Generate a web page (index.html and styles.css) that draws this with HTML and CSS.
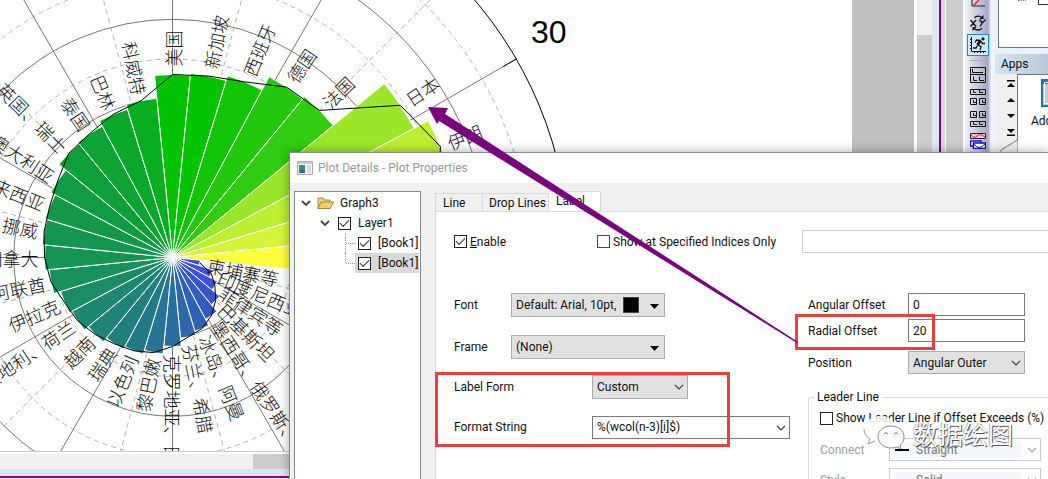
FILE: index.html
```html
<!DOCTYPE html>
<html lang="en">
<head>
<meta charset="utf-8">
<title>Plot Details</title>
<link rel="stylesheet" href="styles.css">
</head>
<body>
<main class="desktop">
  <section class="graph-window">
    <svg class="chart" id="chart" role="img" aria-label="Polar chart by country"></svg>
    <div class="hscroll"><div class="hscroll-thumb"></div></div>
    <div class="frame-edge"></div>
  </section>
  <div class="page-gray"></div>
  <div class="vscroll"><div class="vscroll-track"></div></div>
  <div class="frame-side"></div>
  <div class="mdi-gray"></div>
  <nav class="toolbar" aria-label="Graph tools">
    <svg class="tool-cut" viewBox="0 0 16 7"><path d="M2 0V6H15" fill="none" stroke="#222"/><path d="M3 6L9 0" stroke="#e22" fill="none" stroke-width="1.5"/></svg>
    <button class="tool" aria-label="Exchange X-Y axes"><svg viewBox="0 0 16 16"><g fill="none" stroke="#111" stroke-width="1.3"><path d="M.5 5L6 11.500M6 5L.5 11.500M9.500 4.500L12.200 8L15.500 4.500M12.200 8L10 11.500"/><path d="M4.500 3C6 .5 9.500 .5 12 2.500M12 13.500C9.500 15.500 6 15.500 4 13.500"/></g><path d="M13.500 0V4H9.500ZM2.500 16V12H6.500Z" fill="#111"/></svg></button>
    <button class="tool selected" aria-label="Speed mode"><svg viewBox="0 0 16 16"><path d="M1.500 0V14.500H16M0 2.500H1M0 5.500H1M0 8.500H1M0 11.500H1M4.500 15V16M7.500 15V16M10.500 15V16M13.500 15V16" fill="none" stroke="#111"/><circle cx="13" cy="1.800" r="1.600" fill="#111"/><path d="M10.500 3.500L7.500 8" fill="none" stroke="#111" stroke-width="2.800"/><path d="M10.500 3.500L6.500 3L5 5.500M11 4L12.500 6.500H15M8 8L11 9.500L10 13M7.500 8.500L6 11H3" fill="none" stroke="#111" stroke-width="1.300"/></svg></button>
    <span class="tool-rule"></span>
    <button class="tool" aria-label="One over two"><svg viewBox="0 0 16 16"><path d="M.5.5H15.500V15.500H.5ZM.5 7.500H15.500M2.500 2V5.500H13M3.500 9.500V13.500H7M9.500 9.500V13.500H14" fill="none" stroke="#111"/></svg></button>
    <button class="tool" aria-label="Merge layers"><svg viewBox="0 0 16 16"><path d="M.5.5H15.500V5.500H.5ZM3.500 1V3.500H6M9.500 1V3.500H13M.5 9.500H6.500V15.500H.5ZM9.500 9.500H15.500V15.500H9.500ZM3.500 11V13.500H6M12.500 11V13.500H15" fill="none" stroke="#111"/></svg></button>
    <button class="tool" aria-label="Extract layers"><svg viewBox="0 0 16 16"><path d="M.5.5H6.500V6.500H.5ZM9.500.5H15.500V6.500H9.500ZM3.500 2V4.500H6M12.500 2V4.500H15M.5 10.500H15.500V15.500H.5ZM3.500 11V13.500H7M9.500 11V13.500H13" fill="none" stroke="#111"/></svg></button>
    <button class="tool" aria-label="Stack graphs"><svg viewBox="0 0 16 16"><path d="M.5.500H15.500V5.500H.5Z" fill="#f7c4cc" stroke="#223"/><path d="M1 2Q4 6 7 3T15 4" fill="none" stroke="#e22"/><path d="M.5 8H11V13H.5Z" fill="#fff" stroke="#1010d0" stroke-width="1.400"/><path d="M3.500 10H15.500V15.500H3.500Z" fill="#fff" stroke="#1010d0" stroke-width="1.400"/><path d="M4 11Q9 18 15 11" fill="none" stroke="#222"/></svg></button>
  </nav>
  <aside class="side">
    <div class="object-tree"><span class="dots"></span><span class="tree-box"></span></div>
    <h2 class="apps-title">Apps</h2>
    <div class="apps">
      <div class="apps-nav">
        <button aria-label="First"><svg viewBox="0 0 8 8"><path d="M0 0H8V1.500H0ZM4 3L8 7H0Z"/></svg></button>
        <button aria-label="Up"><svg viewBox="0 0 8 8"><path d="M4 2L8 6H0Z"/></svg></button>
        <button aria-label="Down"><svg viewBox="0 0 8 8"><path d="M4 6L8 2H0Z"/></svg></button>
        <button aria-label="Last"><svg viewBox="0 0 8 8"><path d="M0 8H8V6.500H0ZM4 5L8 1H0Z"/></svg></button>
      </div>
      <div class="apps-list">
        <span class="app-icon"></span>
        <span class="app-name">Add</span>
      </div>
      <svg class="apps-corner" viewBox="0 0 18 12"><path d="M0 12L17.500 0V12Z" fill="#f0f0f0"/><path d="M17.500 0L1 10V12" fill="none" stroke="#777"/></svg>
    </div>
  </aside>

  <section class="dialog" role="dialog" aria-label="Plot Details - Plot Properties">
    <header class="titlebar">
      <svg class="app-glyph" viewBox="0 0 16 14"><path d="M.5.5H15.500V13.500H.5Z" fill="#f4f6f8" stroke="#a8acb0"/><path d="M1 1H15V3H1Z" fill="#c5ccd2"/><path d="M2 4H8V12H2Z" fill="#3c8d83"/><path d="M3 9H8V12H3Z" fill="#2f6f86"/><path d="M10 4H14V12H10Z" fill="#d5dbe0"/></svg>
      <h1>Plot Details - Plot Properties</h1>
    </header>
    <div class="dialog-body">
      <ul class="tree">
        <li class="lvl0"><svg class="chev" viewBox="0 0 10 8"><path d="M1 2L5 6L9 2"/></svg>
          <svg class="folder" viewBox="0 0 17 14"><path d="M1 12V2H6L7.500 4H13V6" fill="#f3d27a" stroke="#a8863a"/><path d="M1 12.500L4 6H16.500L13 12.500Z" fill="#f5cf5f" stroke="#a8863a"/></svg><span>Graph3</span></li>
        <li class="lvl1"><svg class="chev" viewBox="0 0 10 8"><path d="M1 2L5 6L9 2"/></svg><label><input type="checkbox" checked>Layer1</label></li>
        <li class="lvl2"><i class="branch"></i><label><input type="checkbox" checked>[Book1]</label></li>
        <li class="lvl2 picked"><i class="branch last"></i><label><input type="checkbox" checked>[Book1]</label></li>
      </ul>
      <div class="pages">
        <div class="tabs" role="tablist">
          <button role="tab">Line</button><button role="tab" class="wide">Drop Lines</button><button role="tab" class="active" aria-selected="true">Label</button>
        </div>
        <form class="panel">
          <div class="top-row">
            <label><input type="checkbox" checked><span><u>E</u>nable</span></label>
            <label><input type="checkbox" class="blue">Show at Specified Indices Only</label>
            <input type="text" class="indices" aria-label="Indices">
          </div>
          <div class="columns">
            <div class="col-left">
              <div class="row"><label for="font">Font</label>
                <span class="combo"><select id="font"><option>Default: Arial, 10pt,</option></select><i class="swatch"></i><svg class="tri" viewBox="0 0 9 5"><path d="M0 0H9L4.500 5Z"/></svg></span></div>
              <div class="row gap-l"><label for="frame">Frame</label>
                <span class="combo"><select id="frame"><option>(None)</option></select><svg class="tri" viewBox="0 0 9 5"><path d="M0 0H9L4.500 5Z"/></svg></span></div>
              <div class="row long gap-m"><label for="form">Label Form</label>
                <span class="combo short"><select id="form"><option>Custom</option></select><svg class="chev" viewBox="0 0 10 8"><path d="M1 2L5 6L9 2"/></svg></span></div>
              <div class="row long gap-m"><label for="fmt">Format String</label>
                <span class="combo wide"><input type="text" id="fmt" value="%(wcol(n-3)[i]$)"><svg class="chev" viewBox="0 0 10 8"><path d="M1 2L5 6L9 2"/></svg></span></div>
            </div>
            <div class="col-right">
              <div class="row"><label for="ang">Angular Offset</label><input type="text" id="ang" value="0"></div>
              <div class="row gap-xs"><label for="rad">Radial Offset</label><input type="text" id="rad" value="20"></div>
              <div class="row gap-s"><label for="pos">Position</label>
                <span class="combo"><select id="pos"><option>Angular Outer</option></select><svg class="chev" viewBox="0 0 10 8"><path d="M1 2L5 6L9 2"/></svg></span></div>
              <fieldset class="leader">
                <legend>Leader Line</legend>
                <label class="check"><input type="checkbox">Show Leader Line if Offset Exceeds (%)</label>
                <div class="row dim"><label for="conn">Connect</label>
                  <span class="combo"><select id="conn" disabled><option>Straight</option></select><i class="stroke"></i><svg class="chev" viewBox="0 0 10 8"><path d="M1 2L5 6L9 2"/></svg></span></div>
                <div class="row dim"><label for="sty">Style</label>
                  <span class="combo"><select id="sty" disabled><option>Solid</option></select><svg class="chev" viewBox="0 0 10 8"><path d="M1 2L5 6L9 2"/></svg></span></div>
              </fieldset>
            </div>
          </div>
        </form>
      </div>
    </div>
  </section>

  <div class="mark mark-format"></div>
  <div class="mark mark-radial"></div>
  <svg class="arrow" viewBox="0 0 372 238"><path d="M0 0L20 1L17 7L370 235L369 236L11 14L9 17Z" fill="#7b0080"/></svg>
  <div class="watermark">
    <svg viewBox="0 0 44 36"><g fill="#fff"><path d="M19 2C8 2 2 9 2 15C2 20 5 23 8 25L6 30L13 27C24 29 34 23 34 14C34 7 27 2 19 2Z" fill-opacity=".85"/><path d="M2 15C2 20 5 23 8 25L6 30L13 27" stroke="#999"/><path d="M29 12C21 12 16 17 16 23C16 29 22 34 29 34C31 34 33 33.500 35 33L39 35L38 31C41 29 42 26 42 23C42 17 37 12 29 12Z" stroke="#888"/></g><path d="M22 20Q24 17 26 20M32 20Q34 17 36 20" fill="none" stroke="#777"/></svg>
    <span>数据绘图</span>
  </div>
</main>
<script src="chart.js"></script>
</body>
</html>
```

FILE: styles.css
```css
* { box-sizing: border-box; }
body { margin: 0; font: 12px/16px Roboto, "Noto Sans", sans-serif; color: #111; background: #fff; }
button { border: 0; padding: 0; background: none; font: inherit; color: inherit; }
input, select { font: inherit; color: inherit; margin: 0; }
svg { display: block; }

.desktop { position: relative; height: 100vh; overflow: hidden; display: grid; grid-template-columns: minmax(0, 1fr) 62px 18px 14px 19px 30px 53px; }

.graph-window { display: flex; flex-direction: column; min-height: 0; }
.chart { flex: 1; width: 100%; min-height: 0; background: #fff; overflow: hidden; border-bottom: 1px solid #ccc; }
.ring, .spoke { fill: none; stroke: #777; stroke-width: 1; }
.minor { stroke: #b4b4b4; stroke-dasharray: 5 4; }
.outer { stroke: #000; stroke-width: 1; }
.wedge { stroke: #fff; stroke-width: 1; }
.trace { fill: none; stroke: #000; stroke-width: 1; }
.name { font: 300 18px/18px "Noto Sans CJK SC", sans-serif; fill: #111; dominant-baseline: central; }
.degree { font: 32px/32px "Liberation Sans", sans-serif; fill: #000; }
.hscroll { height: 15px; margin-top: 2px; background: #f0f0f0; display: flex; }
.hscroll-thumb { margin-left: 253px; flex: 1; background: #cdcdcd; }
.frame-edge { height: 10px; background: #dce6f2; border-bottom: 1px solid #eee; box-shadow: inset 0 -2px #a0007c; }

.page-gray { background: #c0c0c0; }
.vscroll { padding: 0 0 0 3px; background: #fff; }
.vscroll-track { height: 100%; background: linear-gradient(#f0f0f0 35px, #cdcdcd 35px); }
.frame-side { background: linear-gradient(90deg, #dce8f4 7px, #8c0070 7px, #8c0070 9px, #d5dbe6 9px, #d5dbe6 13px, #fff 13px); }
.mdi-gray { background: #cdcdcd; border-right: 2px solid #fff; }

.toolbar { display: flex; flex-direction: column; align-items: flex-start; background: linear-gradient(90deg, #eff1f7, #a8a8c8 23px, #eef3fc 26px); }
.tool { width: 22px; height: 22px; display: grid; place-items: center; flex: none; border: 1px solid transparent; margin-left: 2px; }
.tool svg { width: 16px; height: 16px; }
.tool-cut { width: 16px; height: 7px; margin: 0 0 5px 5px; flex: none; }
.tool.selected { background: #cde8fb; border-color: #2088d0; }
.tool-rule { width: 16px; height: 1px; background: #a8a8b8; margin: 4px 5px 3px; }

.side { background: #eaf1fa; display: flex; flex-direction: column; }
.object-tree { height: 48px; margin-left: 3px; background: #fff; border: solid #777; border-width: 0 0 1px 1px; display: flex; justify-content: flex-end; gap: 12px; }
.dots { width: 8px; height: 1px; border-top: 1px dotted #888; }
.tree-box { width: 10px; height: 5px; border: solid #333; border-width: 0 0 1px 1px; }
.apps-title { margin: 6px 0 0; padding: 0 6px; height: 20px; font: inherit; line-height: 20px; background: linear-gradient(90deg, #d8e3f0, #b6c9dc); }
.apps { position: relative; flex: none; height: 78px; display: grid; grid-template-columns: 22px 1fr; background: #f0f0f0; }
.apps-nav { display: flex; flex-direction: column; gap: 8px; padding: 6px 0 0 12px; }
.apps-nav button, .apps-nav svg { width: 8px; height: 8px; }
.apps-list { background: #fff; border: solid #777; border-width: 1px 0 0 1px; padding: 4px 0 0 13px; display: flex; flex-direction: column; gap: 6px; overflow: hidden; }
.app-icon { width: 30px; height: 28px; margin-left: 10px; background: #ccc; border: 2px solid #1878b8; border-top-width: 5px; outline: 1px solid #fff; outline-offset: -4px; flex: none; }
.apps-corner { position: absolute; left: 5px; bottom: 0; width: 18px; height: 12px; }

.dialog { position: absolute; left: 289px; top: 152px; right: 0; bottom: 0; background: #f0f0f0; border: solid #8a8a8a; border-width: 1px 0 0 1px; box-shadow: 0 0 10px rgba(0, 0, 0, .35); display: flex; flex-direction: column; overflow: hidden; }
.titlebar { height: 30px; flex: none; padding: 0 7px; background: #fff; display: flex; align-items: center; gap: 5px; }
.titlebar h1 { margin: 0; font: inherit; color: #999; }
.app-glyph { width: 16px; height: 14px; }
.dialog-body { flex: 1; display: grid; grid-template-columns: 127px minmax(0, 1fr); gap: 14px; padding: 8px 0 0 4px; }

.tree { margin: 0; padding: 1px 1px 0; list-style: none; background: #fff; border: 1px solid #828790; border-bottom: 0; }
.tree li { height: 20px; display: flex; align-items: center; white-space: nowrap; }
.tree label { display: flex; align-items: center; gap: 7px; }
.lvl0 { padding-left: 5px; gap: 6px; }
.lvl1 { padding-left: 24px; gap: 8px; }
.lvl2 { padding-left: 49px; }
.picked label { background: #d9d9d9; height: 20px; flex: 1; }
.lvl2 label { padding-left: 3px; }
.branch { width: 10px; height: 20px; border-left: 1px dotted #999; }
.branch::after { content: ""; display: block; height: 10px; border-bottom: 1px dotted #999; }
.branch.last { height: 10px; align-self: flex-start; }
.chev { width: 10px; height: 8px; }
.chev path { fill: none; stroke: #444; stroke-width: 1.2; }
.tree .chev path { stroke-width: 1.8; }
.dim .chev path { stroke: #aaa; }
.folder { width: 17px; height: 14px; }

input[type="checkbox"] { appearance: none; width: 13px; height: 13px; border: 1px solid #222; background: #fff; flex: none; display: grid; place-items: center; }
input[type="checkbox"]:checked::after { content: ""; width: 8px; height: 4px; border: solid #333; border-width: 0 0 1px 1px; transform: rotate(-45deg) translate(1px, -1px); }
input.blue { border-color: #22557f; }

.pages { display: flex; flex-direction: column; }
.tabs { display: flex; align-items: flex-end; height: 20px; }
.tabs button { height: 18px; padding: 0 7px; text-align: left; border: 1px solid #d9d9d9; border-bottom: 0; border-left-width: 0; min-width: 48px; white-space: nowrap; }
.tabs button:first-child { border-left-width: 1px; }
.tabs .wide { width: 66px; padding: 0 6px; }
.tabs .active { background: #fff; height: 20px; width: 52px; padding: 0 7px 2px; }
.panel { flex: 1; background: #fff; border: solid #dcdcdc; border-width: 1px 0 0 1px; padding: 18px 0 0 18px; }
.top-row { display: grid; grid-template-columns: 143px 205px minmax(0, 1fr); align-items: center; height: 23px; }
.top-row label, .check { display: flex; align-items: center; gap: 3px; white-space: nowrap; }
.columns { display: grid; grid-template-columns: 354px minmax(0, 1fr); margin-top: 40px; }
.row { display: grid; grid-template-columns: 57px 154px; align-items: center; height: 24px; }
.row label { white-space: nowrap; }
.row.long { grid-template-columns: 138px 198px; }
.gap-xs { margin-top: 3px; }
.gap-s { margin-top: 9px; }
.gap-m { margin-top: 16px; }
.gap-l { margin-top: 18px; }
.col-right .row { grid-template-columns: 100px 117px; height: 23px; }
.combo { position: relative; display: block; }
.combo.short { width: 96px; }
select { appearance: none; width: 100%; height: 24px; border: 1px solid #adadad; border-radius: 0; background: #e1e1e1; padding: 0 4px; color: #111; opacity: 1; display: block; }
.panel input[type="text"] { width: 100%; height: 23px; border: 1px solid #7a7a7a; background: #fff; padding: 0 4px; outline: 0; }
.panel input.indices { border: 1px solid #ccc; border-right: 0; min-width: 0; }
.col-right select { height: 23px; }
.combo .chev { position: absolute; right: 4px; top: 8px; }
.tri { position: absolute; right: 6px; top: 11px; width: 9px; height: 5px; }
.swatch { position: absolute; left: 112px; top: 4px; width: 16px; height: 16px; background: #000; border: 1px solid #444; }
.leader { margin: 15px 0 0; padding: 5px 0 0 11px; border: 1px solid #dcdcdc; border-right: 0; min-width: 0; }
.leader legend { margin-left: -6px; padding: 0 3px; }
.leader .check { margin-bottom: 12px; }
.leader .row { grid-template-columns: 69px 152px; margin-bottom: 7px; }
.dim { color: #a0a0a0; }
.dim select { background: linear-gradient(#f4f7fc, #f4f7fc) 4px 3px / 127px 16px no-repeat #fff; border-color: #ccc; color: #777; padding-left: 26px; }
.stroke { position: absolute; left: 6px; top: 11px; width: 14px; height: 2px; background: #000; }

.mark { position: absolute; border: 3px solid #e93f42; }
.mark-format { left: 435px; top: 372px; width: 295px; height: 75px; }
.mark-radial { left: 795px; top: 314px; width: 140px; height: 36px; }
.arrow { position: absolute; left: 428px; top: 107px; width: 372px; height: 238px; }
.watermark { position: absolute; left: 862px; top: 414px; display: flex; gap: 7px; }
.watermark svg { width: 44px; height: 36px; }
.watermark span { font: 25px/38px "Noto Sans CJK SC", sans-serif; color: #fff; text-shadow: 1px 1px 0 #555, -1px 0 0 #aaa; }
```

FILE: chart.js
```js
const svg = document.getElementById("chart");
const CX = 172.5, CY = 257.5, STEP = 11.25, RING = 39.7;

// Clockwise from the top: label, radius, fill.
const slices = [
  ["美国", 183, "#00c200"], ["新加坡", 185, "#04c300"], ["西班牙", 190, "#12c504"],
  ["德国", 205, "#22c80a"], ["法国", 208, "#30cc10"], ["日本", 274, "#9ae628"],
  ["伊朗", 290, "#baf02f"], ["", 270, "#d4f636"], ["", 200, "#ffff3c"],
  ["柬埔寨等", 28, "#4050e4"], ["印度尼西亚", 42, "#3c50dc"], ["菲律宾等", 51, "#3a52d8"],
  ["巴基斯坦", 61, "#3656cc"], ["墨西哥、俄罗斯、", 70, "#325cc0"], ["冰岛、阿曼", 77, "#2e62b4"],
  ["芬兰、希腊", 81, "#2c68aa"], ["克罗地亚、日", 89, "#296ea0"], ["黎巴嫩", 97, "#267496"],
  ["以色列", 101, "#227a88"], ["瑞典", 104, "#20807e"], ["越南", 109, "#1e8478"],
  ["奥地利、荷兰", 114, "#1c8870"], ["伊拉克", 117, "#1a8c66"], ["阿联酋", 124, "#18915c"],
  ["加拿大", 128, "#169550"], ["挪威", 131, "#149650"], ["马来西亚", 133, "#129848"],
  ["澳大利亚", 138, "#109c42"], ["英国、瑞士", 147, "#0ea038"], ["泰国", 149, "#0ca432"],
  ["巴林", 155, "#0aa82a"], ["科威特", 160, "#08ae20"]
];

function point(bearing, r) {
  const a = bearing * Math.PI / 180;
  return [CX + r * Math.sin(a), CY - r * Math.cos(a)];
}
function add(tag, attrs, text) {
  const el = document.createElementNS("http://www.w3.org/2000/svg", tag);
  for (const key in attrs) el.setAttribute(key, attrs[key]);
  if (text) el.textContent = text;
  svg.appendChild(el);
}

for (let i = 1; i <= 10; i++) {
  const kind = i === 10 ? "ring outer" : i % 2 ? "ring minor" : "ring";
  add("circle", { cx: CX, cy: CY, r: i * RING, class: kind });
}
for (let b = 0; b < 360; b += 15) {
  const [x, y] = point(b, RING * 10);
  add("path", { d: `M${CX} ${CY}L${x} ${y}`, class: b % 30 ? "spoke minor" : "spoke" });
}
add("path", { d: `M${point(60, 382)}L${point(60, 397)}`, class: "outer" });

slices.forEach(([, r, fill], i) => {
  const from = point((i - 0.5) * STEP, r), to = point((i + 0.5) * STEP, r);
  add("path", { d: `M${CX} ${CY}L${from}A${r} ${r} 0 0 1 ${to}Z`, fill, class: "wedge" });
});
const trace = slices.map(([, r], i) => point(i * STEP, r).join(" "));
add("path", { d: `M${trace.slice(9).concat(trace.slice(0, 8)).join("L")}`, class: "trace" });

slices.forEach(([name, r], i) => {
  if (!name) return;
  const outward = i <= 16;
  const bearing = i * STEP, [x, y] = point(bearing, r + (outward ? 8 : 6));
  add("text", {
    class: "name",
    "text-anchor": outward ? "start" : "end",
    transform: `translate(${x} ${y}) rotate(${outward ? bearing - 90 : bearing + 90})`
  }, name);
});
add("text", { x: 531, y: 43, class: "degree" }, "30");
```
